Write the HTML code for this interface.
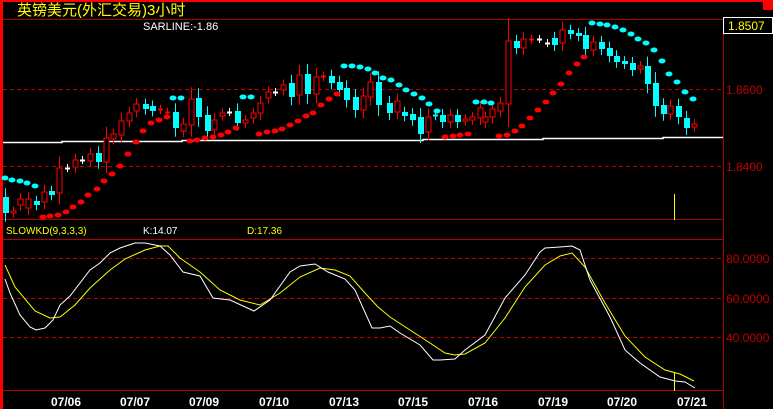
<!DOCTYPE html>
<html><head><meta charset="utf-8"><style>
html,body{margin:0;padding:0;background:#000;width:773px;height:409px;overflow:hidden}
svg{display:block}
text{font-family:"Liberation Sans",sans-serif}
</style></head><body>
<svg id="s" width="773" height="409" xmlns="http://www.w3.org/2000/svg">
<rect width="773" height="409" fill="#000"/>
<rect x="0" y="0" width="773" height="2" fill="#f00"/>
<rect x="0" y="0" width="3" height="409" fill="#f00"/>
<rect x="763" y="0" width="10" height="10" fill="#f00"/>
<line x1="3" y1="19.5" x2="723" y2="19.5" stroke="#b00000"/>
<line x1="3" y1="219.5" x2="723" y2="219.5" stroke="#b00000"/>
<line x1="3" y1="239.5" x2="723" y2="239.5" stroke="#b00000"/>
<line x1="3" y1="390.5" x2="723" y2="390.5" stroke="#b00000"/>
<line x1="723.5" y1="19" x2="723.5" y2="409" stroke="#b00000"/>
<g stroke="#c00000" stroke-dasharray="4,3">
<line x1="3" y1="89.5" x2="723" y2="89.5"/><line x1="3" y1="166.5" x2="723" y2="166.5"/>
<line x1="3" y1="258.5" x2="723" y2="258.5"/><line x1="3" y1="298.5" x2="723" y2="298.5"/><line x1="3" y1="337.5" x2="723" y2="337.5"/>
</g>
<text x="17" y="15" fill="#ffff00" font-size="15" font-family="'Liberation Sans','Noto Sans CJK SC',sans-serif">英镑美元(外汇交易)3小时</text>
<text x="143" y="30" fill="#fff" font-size="11">SARLINE:-1.86</text>
<rect x="723.5" y="17.5" width="49" height="16" fill="#000" stroke="#fff"/>
<text x="728" y="30" fill="#ffff00" font-size="12">1.8507</text>
<g fill="#c00000" font-size="12">
<text x="726" y="94">1.8600</text><text x="726" y="171">1.8400</text>
<text x="726" y="263">80.0000</text><text x="726" y="303">60.0000</text><text x="726" y="342">40.0000</text>
</g>
<text x="6" y="234" fill="#ffff00" font-size="10">SLOWKD(9,3,3,3)</text>
<text x="143" y="234" fill="#fff" font-size="10">K:14.07</text>
<text x="247" y="234" fill="#ffff00" font-size="10">D:17.36</text>
<g fill="#fff" font-size="12" font-weight="bold" font-family="'Liberation Mono',monospace">
<text x="51" y="406">07/06</text><text x="120" y="406">07/07</text><text x="189" y="406">07/09</text>
<text x="259" y="406">07/10</text><text x="329" y="406">07/13</text><text x="398" y="406">07/15</text>
<text x="468" y="406">07/16</text><text x="538" y="406">07/19</text><text x="607" y="406">07/20</text><text x="677" y="406">07/21</text>
</g>
<polyline fill="none" stroke="#fff" stroke-width="1.5" points="3,142.5 62,142.5 62,141.5 182,141.5 182,140.5 423,140.5 423,139.5 543,139.5 543,138.5 663,138.5 663,137.5 723,137.5"/>
<line x1="674.5" y1="194" x2="674.5" y2="220" stroke="#ff0"/>
<line x1="674.5" y1="372" x2="674.5" y2="391" stroke="#ff0"/>
<polyline fill="none" stroke="#ff0" points="5,265 15,287 35,311 50,318 60,317 75,305 90,288 110,270 125,259 145,250 160,246 168,246 180,258 200,272 220,290 240,300 260,305 280,293 300,277 320,268 335,270 350,276 365,293 378,307 390,317 410,330 430,343 445,353 455,355 465,354 485,343 505,318 525,287 545,265 560,256 572,253 585,267 605,303 625,336 645,357 665,370 680,374 694,381"/>
<polyline fill="none" stroke="#fff" points="5,279 10,293 20,315 30,327 36,330 45,328 53,320 60,305 70,296 90,270 100,263 110,253 120,248 135,243 145,243 160,246 170,255 183,272 200,276 213,298 230,300 254,311 270,300 290,272 300,266 315,264 328,272 345,279 355,290 372,328 380,328 390,326 400,333 420,345 433,360 440,360 455,359 465,350 485,335 505,298 525,275 540,252 545,248 560,247 572,246 580,250 590,280 610,317 625,350 640,363 660,377 675,381 685,382 695,388"/>
<g id="c"></g>
</svg>
<script>
var C=[[5,197,213,'c'],[13,211,213,'r'],[20,199,205,'r'],[28,199,208,'r'],[36,201,205,'c'],[44,192,202,'r'],[51,191,195,'c'],[59,168,193,'r'],[67,168,168,'w'],[75,160,167,'r'],[82,160,160,'w'],[90,154,161,'r'],[98,153,162,'c'],[106,138,162,'r'],[113,134,139,'r'],[121,121,135,'r'],[129,113,121,'r'],[136,104,111,'r'],[145,104,109,'c'],[152,106,111,'c'],[160,109,110,'r'],[167,112,113,'r'],[175,112,128,'c'],[183,124,131,'r'],[191,99,125,'r'],[198,98,117,'c'],[207,115,131,'c'],[214,120,130,'r'],[222,113,116,'r'],[229,112,112,'w'],[237,111,123,'c'],[245,120,123,'r'],[253,113,118,'r'],[260,103,113,'r'],[268,92,98,'r'],[275,92,92,'w'],[283,85,90,'r'],[291,83,97,'c'],[299,75,95,'r'],[307,74,94,'c'],[316,77,94,'r'],[323,76,77,'r'],[331,76,83,'c'],[339,82,90,'c'],[346,88,100,'c'],[355,97,110,'c'],[363,96,110,'r'],[370,82,97,'r'],[378,82,105,'c'],[389,103,113,'c'],[397,101,112,'r'],[404,112,116,'c'],[412,114,120,'c'],[420,117,134,'c'],[428,117,132,'r'],[435,115,116,'c'],[442,115,122,'c'],[450,115,122,'r'],[457,115,122,'c'],[465,119,121,'r'],[472,117,120,'r'],[480,108,118,'r'],[485,117,122,'r'],[492,109,117,'r'],[500,103,111,'r'],[508,41,104,'r'],[516,41,48,'c'],[523,39,48,'r'],[531,39,40,'r'],[539,39,39,'w'],[547,43,43,'w'],[554,38,45,'c'],[562,30,43,'r'],[570,30,34,'c'],[578,33,36,'c'],[585,35,49,'c'],[593,42,50,'r'],[601,42,49,'c'],[609,48,56,'c'],[616,56,62,'c'],[624,61,64,'c'],[632,63,70,'c'],[640,66,69,'r'],[647,66,84,'c'],[655,83,106,'c'],[663,105,114,'c'],[670,106,114,'r'],[678,106,117,'c'],[686,118,128,'c'],[694,124,127,'r']];
var CY=[[5,178],[12,180],[20,181],[27,183],[35,186],[173,98],[181,98],[243,97],[251,97],[344,66],[352,66],[360,67],[368,69],[375,73],[383,78],[391,80],[399,85],[406,90],[414,94],[422,98],[429,104],[437,111],[476,102],[484,102],[491,103],[592,23],[600,24],[607,25],[615,27],[623,30],[631,34],[638,39],[646,43],[654,50],[662,61],[669,74],[677,82],[685,92],[693,99]];
var RD=[[43,217],[50,216],[58,215],[66,212],[73,207],[81,202],[88,195],[97,189],[104,181],[112,174],[120,166],[128,154],[136,142],[143,131],[151,123],[159,120],[167,117],[190,141],[197,140],[205,138],[213,137],[221,135],[228,132],[236,128],[259,134],[267,132],[275,131],[282,129],[290,125],[298,121],[306,116],[313,113],[321,105],[329,99],[337,94],[445,137],[453,136],[460,135],[468,134],[499,136],[507,135],[515,131],[522,126],[530,118],[538,110],[546,102],[553,93],[561,84],[569,73],[577,64],[584,57]];
var h='';
C.forEach(function(d){var x=d[0],t=d[1],b=d[2],k=d[3];var col=k=='c'?'#0ff':k=='r'?'#f00':'#fff';
var wt=t-4-(b-t)*0.3,wb=b+4+(b-t)*0.3;
h+='<line x1="'+(x+.5)+'" y1="'+wt+'" x2="'+(x+.5)+'" y2="'+wb+'" stroke="'+col+'"/>';
if(b-t<2){h+='<line x1="'+(x-2)+'" y1="'+(t+.5)+'" x2="'+(x+3)+'" y2="'+(t+.5)+'" stroke="'+col+'" stroke-width="2"/>';}
else if(k=='r'){h+='<rect x="'+(x-2)+'" y="'+t+'" width="5" height="'+(b-t)+'" fill="#000" stroke="#f00"/>';}
else{h+='<rect x="'+(x-2)+'" y="'+t+'" width="6" height="'+(b-t)+'" fill="'+col+'"/>';}});
CY.forEach(function(d){h+='<ellipse cx="'+d[0]+'" cy="'+d[1]+'" rx="3.5" ry="2.5" fill="#0ff"/>';});
RD.forEach(function(d){h+='<ellipse cx="'+d[0]+'" cy="'+d[1]+'" rx="3.5" ry="2.5" fill="#f00"/>';});
document.getElementById('c').innerHTML=h;
</script>
</body></html>
